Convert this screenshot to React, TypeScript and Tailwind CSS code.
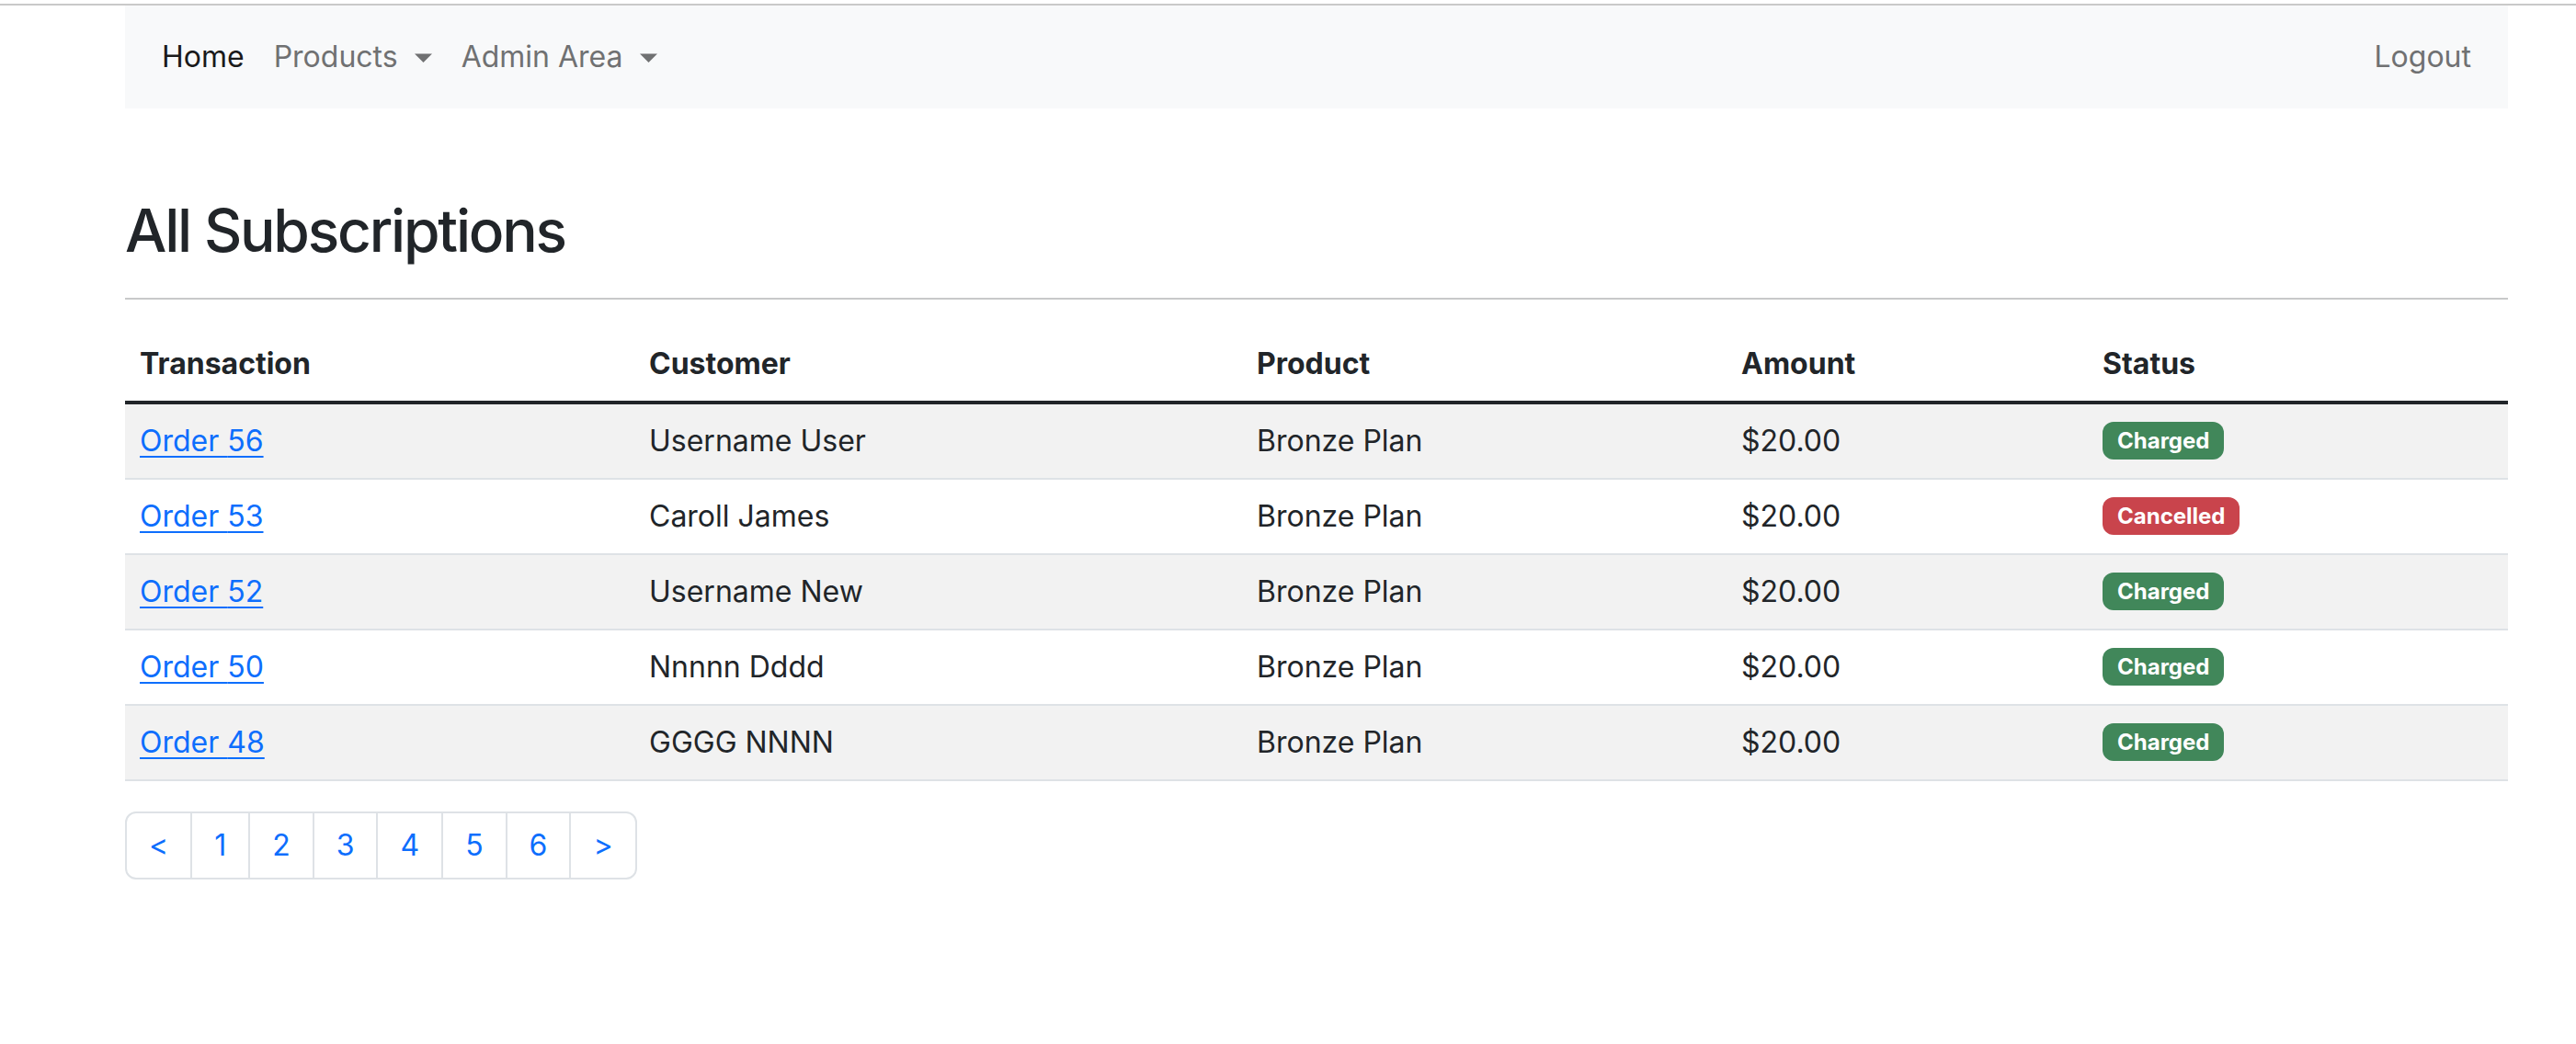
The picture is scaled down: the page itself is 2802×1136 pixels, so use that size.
type Status = 'Charged' | 'Cancelled'

type Subscription = {
  order: number
  customer: string
  product: string
  amount: string
  status: Status
}

const subscriptions: Subscription[] = [
  { order: 56, customer: 'Username User', product: 'Bronze Plan', amount: '$20.00', status: 'Charged' },
  { order: 53, customer: 'Caroll James', product: 'Bronze Plan', amount: '$20.00', status: 'Cancelled' },
  { order: 52, customer: 'Username New', product: 'Bronze Plan', amount: '$20.00', status: 'Charged' },
  { order: 50, customer: 'Nnnnn Dddd', product: 'Bronze Plan', amount: '$20.00', status: 'Charged' },
  { order: 48, customer: 'GGGG NNNN', product: 'Bronze Plan', amount: '$20.00', status: 'Charged' },
]

const pages = ['<', '1', '2', '3', '4', '5', '6', '>']

function Caret() {
  return (
    <svg width="19" height="10" viewBox="0 0 19 10" className="ml-[18px] mt-[2px]">
      <polygon points="0,0.5 19,0.5 9.5,10" fill="currentColor" />
    </svg>
  )
}

function Navbar() {
  return (
    <nav className="flex h-[112px] items-center justify-between bg-[#f8f9fa] px-6 text-[32px] leading-[48px]">
      <div className="flex items-center">
        <a className="px-4 text-[#1a1a1a]">Home</a>
        <a className="flex items-center px-4 text-[#707172]">
          Products
          <Caret />
        </a>
        <a className="flex items-center px-4 text-[#707172]">
          Admin Area
          <Caret />
        </a>
      </div>
      <a className="px-4 text-[#707172]">Logout</a>
    </nav>
  )
}

function Badge({ status }: { status: Status }) {
  const color = status === 'Charged' ? 'bg-[#41875a]' : 'bg-[#c9444c]'
  return (
    <div className="flex h-[48px] items-center">
      <span
        className={`${color} inline-block rounded-[12px] px-[16px] py-[8px] text-[24px] font-bold leading-[25px] text-white`}
      >
        {status}
      </span>
    </div>
  )
}

export default function App() {
  return (
    <div className="min-h-screen bg-white font-['Inter','Liberation_Sans',sans-serif] text-[#212529]">
      <div className="mt-[4px] h-[2px] w-full bg-[#c9c9c9]" />
      <div className="ml-[136px] w-[2592px]">
        <Navbar />

        <h2 className="mt-[95px] text-[64px] font-medium leading-[1.2] tracking-[-2.2px]">All Subscriptions</h2>
        <div className="mt-[34px] h-[2px] bg-[#c8c9ca]" />

        <table className="mt-[30px] w-full table-fixed border-collapse text-[32px] leading-[48px]">
          <colgroup>
            <col className="w-[554px]" />
            <col className="w-[661px]" />
            <col className="w-[527px]" />
            <col className="w-[393px]" />
            <col className="w-[457px]" />
          </colgroup>
          <thead>
            <tr className="border-b-4 border-[#212529]">
              {['Transaction', 'Customer', 'Product', 'Amount', 'Status'].map((h) => (
                <th key={h} className="p-4 text-left font-bold">
                  {h}
                </th>
              ))}
            </tr>
          </thead>
          <tbody>
            {subscriptions.map((s, i) => (
              <tr
                key={s.order}
                className={`border-b-2 border-[#dee2e6] ${i % 2 === 0 ? 'bg-[#f2f2f2]' : 'bg-white'}`}
              >
                <td className="p-4 align-top">
                  <a href="#" className="text-[#0d6efd] underline decoration-2 underline-offset-[5px]">
                    Order {s.order}
                  </a>
                </td>
                <td className="p-4 align-top">{s.customer}</td>
                <td className="p-4 align-top">{s.product}</td>
                <td className="p-4 align-top">{s.amount}</td>
                <td className="p-4 align-top">
                  <Badge status={s.status} />
                </td>
              </tr>
            ))}
          </tbody>
        </table>

        <ul className="mt-[33px] inline-flex h-[74px] rounded-[12px] border-2 border-[#dee2e6] text-[32px] text-[#0d6efd]">
          {pages.map((p, i) => (
            <li
              key={p}
              className={`flex items-center px-6 ${i > 0 ? 'border-l-2 border-[#dee2e6]' : ''}`}
            >
              {p}
            </li>
          ))}
        </ul>
      </div>
    </div>
  )
}
